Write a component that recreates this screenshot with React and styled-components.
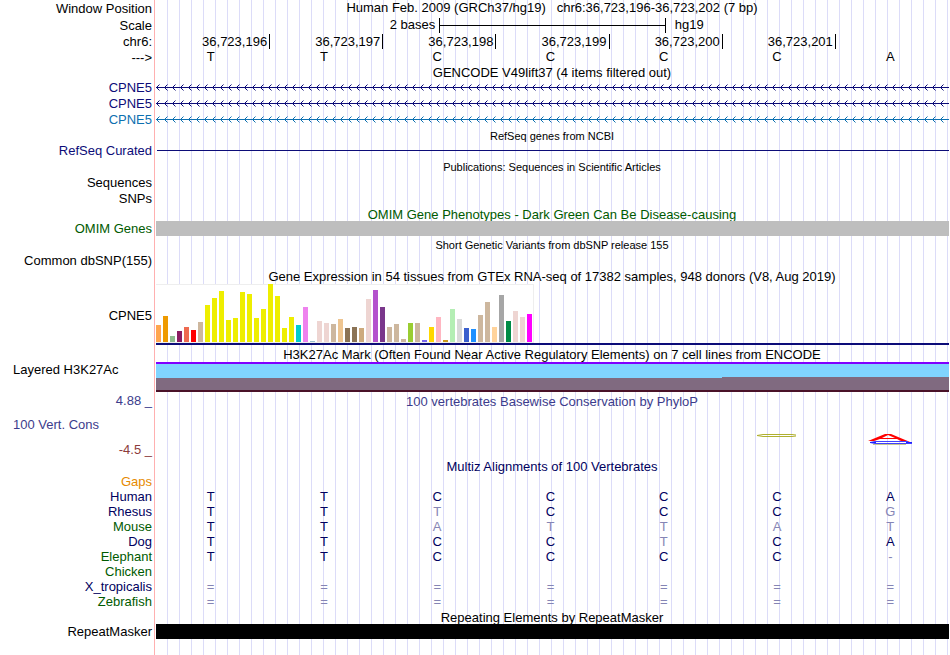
import React from "react";
import styled, { createGlobalStyle } from "styled-components";

const GlobalStyle = createGlobalStyle`
  * {
    box-sizing: border-box;
  }

  body {
    margin: 0;
    background-color: white;
  }
`;

const Browser = styled.main`
  min-height: 100vh;
  padding-right: 1px;
  font-family: "Liberation Sans", Arial, sans-serif;
  font-size: 13px;
  line-height: 16px;
  color: black;
  white-space: nowrap;
  background-image: linear-gradient(
      to right,
      white 154px,
      #ffb0b0 154px,
      #ffb0b0 155px,
      white 155px,
      white 160px,
      transparent 160px
    ),
    repeating-linear-gradient(
      to right,
      transparent 0,
      transparent 11px,
      #dcdcf8 11px,
      #dcdcf8 12px
    );
`;

const Row = styled.div`
  display: grid;
  grid-template-columns: 155px minmax(0, 1fr);
  grid-template-rows: minmax(0, 1fr);
  align-items: center;
  height: ${(props) => props.$height || 16}px;
`;

const Label = styled.div`
  padding: 1px 3px 0 0;
  text-align: right;
  color: ${(props) => props.$color || "black"};
`;

const SideLabel = styled(Label)`
  align-self: start;
  padding: 0 0 0 13px;
  text-align: left;
`;

const Title = styled.h2`
  grid-column: 2;
  margin: 0;
  padding-top: 2px;
  font-size: ${(props) => (props.$small ? 11 : 13)}px;
  font-weight: normal;
  text-align: center;
  color: ${(props) => props.$color || "black"};
`;

const Position = styled(Title)`
  padding-top: 0;
`;

const ScaleTrack = styled.div`
  display: grid;
  grid-template-columns: 5fr 4fr 5fr;
  align-items: center;
  padding-left: 1px;
`;

const ScaleText = styled.span`
  padding: 0 ${(props) => (props.$end ? 9 : 4)}px;
  text-align: ${(props) => (props.$end ? "left" : "right")};
`;

const ScaleBar = styled.div`
  display: flex;
  align-items: center;
  height: 15px;
  border: solid black;
  border-width: 0 1px;

  &::before {
    content: "";
    flex: 1;
    height: 1px;
    background-color: black;
  }
`;

const Ruler = styled.div`
  display: grid;
  grid-template-columns: repeat(7, 1fr);
  padding-left: 2px;
`;

const Tick = styled.span`
  height: 15px;
  padding-right: 2px;
  border-right: 1px solid black;
  text-align: right;
`;

const Bases = styled.div`
  display: grid;
  grid-template-columns: repeat(7, 1fr);
  margin-left: -1px;
  padding-right: 2px;
  text-align: center;
`;

const GeneLine = styled.svg`
  display: block;
  width: 100%;
  height: 10px;
  padding-left: 1px;
`;

const Band = styled.div`
  height: ${(props) => props.$height}px;
  margin-left: ${(props) => props.$inset || 1}px;
  background-color: ${(props) => props.$color};
`;

const Expression = styled.div`
  align-self: start;
  padding-left: 1px;
`;

const ExpressionChart = styled.div`
  display: flex;
  align-items: flex-end;
  gap: 2px;
  width: 378px;
  height: 59px;
  background-color: white;
  border: solid #eeeeee;
  border-width: 1px 1px 1px 0;
`;

const Bar = styled.div`
  flex: 0 0 5px;
`;

const ExpressionBase = styled.div`
  height: 2px;
  background-color: #0c0c78;
`;

const Histone = styled.div`
  display: grid;
  grid-template-columns: 5fr 2fr;
  height: 30px;
  margin-left: 1px;
  border-top: 2px solid #8000ff;
  background-color: #80d4ff;
`;

const HistoneSignal = styled.div`
  align-self: end;
  height: ${(props) => props.$height}px;
  background-color: #806a80;
  border-bottom: 2px solid #4a1228;
`;

const Conservation = styled.div`
  display: grid;
  grid-template-columns: 155px minmax(0, 1fr);
  height: 66px;
`;

const ConservationLabels = styled.div`
  display: flex;
  flex-direction: column;
  justify-content: space-between;
`;

const Logos = styled(Bases)`
  margin: 24px 0 0;
  justify-items: center;
`;

const Logo = styled.svg`
  display: block;
  grid-column: ${(props) => props.$column};
`;

const AlignmentTrack = styled.div`
  padding-right: 2px;
`;

const Alignment = styled.table`
  width: 100%;
  table-layout: fixed;
  border-spacing: 0;
`;

const Species = styled.th`
  width: 154px;
  height: 15px;
  padding: 0 2px 0 0;
  font-weight: normal;
  line-height: 15px;
  text-align: right;
  color: ${(props) => props.$color};
`;

const AlignedBase = styled.td`
  padding: 0;
  line-height: 15px;
  text-align: center;
  color: ${(props) => (props.$faded ? "#8585b5" : "#00005e")};
`;

const navy = "#0c0c78";
const blue = "#0c70b0";
const darkGreen = "#005a00";
const phylo = "#3c3c8c";

const sequence = ["T", "T", "C", "C", "C", "C", "A"];

const positions = [
  "36,723,196",
  "36,723,197",
  "36,723,198",
  "36,723,199",
  "36,723,200",
  "36,723,201",
];

const genes = [
  { id: "transcript1", name: "CPNE5", color: navy },
  { id: "transcript2", name: "CPNE5", color: navy },
  { id: "transcript3", name: "CPNE5", color: blue },
];

const tissues = [
  [17, "#ffa54f"],
  [26, "#ee9a00"],
  [6, "#8fbc8f"],
  [11, "#8b1c62"],
  [15, "#ee6a50"],
  [12, "#ff0000"],
  [20, "#cdb79e"],
  [37, "#eeee00"],
  [44, "#eeee00"],
  [51, "#eeee00"],
  [22, "#eeee00"],
  [24, "#eeee00"],
  [50, "#eeee00"],
  [48, "#eeee00"],
  [24, "#eeee00"],
  [33, "#eeee00"],
  [58, "#eeee00"],
  [46, "#eeee00"],
  [14, "#eeee00"],
  [25, "#eeee00"],
  [17, "#00cdcd"],
  [35, "#ee82ee"],
  [1, "#9ac0cd"],
  [21, "#eed5d2"],
  [19, "#eed5d2"],
  [18, "#cdb79e"],
  [23, "#eec591"],
  [14, "#8b7355"],
  [15, "#8b7355"],
  [14, "#cdaa7d"],
  [43, "#eed5d2"],
  [52, "#b452cd"],
  [35, "#7a378b"],
  [15, "#cdb79e"],
  [18, "#cdb79e"],
  [3, "#cdb79e"],
  [19, "#9acd32"],
  [19, "#cdb79e"],
  [2, "#7a67ee"],
  [15, "#ffd700"],
  [25, "#ffb6c1"],
  [2, "#cd9b1d"],
  [33, "#b4eeb4"],
  [23, "#d9d9d9"],
  [14, "#3a5fcd"],
  [13, "#1e90ff"],
  [27, "#cdb79e"],
  [40, "#cdb79e"],
  [15, "#ffd39b"],
  [47, "#a6a6a6"],
  [21, "#008b45"],
  [31, "#eed5d2"],
  [25, "#eed5d2"],
  [28, "#ff00ff"],
];

const species = [
  { name: "Gaps", color: "#e68a00", bases: "       " },
  { name: "Human", color: "#00005e", bases: "TTCCCCA" },
  { name: "Rhesus", color: "#00005e", bases: "TTTCCCG" },
  { name: "Mouse", color: darkGreen, bases: "TTATTAT" },
  { name: "Dog", color: "#00005e", bases: "TTCCTCA" },
  { name: "Elephant", color: darkGreen, bases: "TTCCCC-" },
  { name: "Chicken", color: darkGreen, bases: "       " },
  { name: "X_tropicalis", color: "#00005e", bases: "=======" },
  { name: "Zebrafish", color: darkGreen, bases: "=======" },
];

const Gene = ({ id, name, color }) => (
  <Row>
    <Label $color={color}>{name}</Label>
    <GeneLine aria-hidden="true">
      <defs>
        <pattern id={id} width="8" height="10" patternUnits="userSpaceOnUse">
          <path d="M1 4h1v1h-1zM2 3h1v1h-1zM1 6h1v1h-1zM2 7h1v1h-1z" fill={color} />
          <path d="M3 2h1v1h-1zM3 8h1v1h-1z" fill={color} opacity="0.5" />
        </pattern>
      </defs>
      <rect width="100%" height="10" fill={`url(#${id})`} />
      <rect y="5" width="100%" height="1" fill={color} />
    </GeneLine>
  </Row>
);

const App = () => {
  return (
    <>
      <GlobalStyle />
      <Browser>
        <Row>
          <Label>Window Position</Label>
          <Position>
            Human Feb. 2009 (GRCh37/hg19) &nbsp; chr6:36,723,196-36,723,202 (7
            bp)
          </Position>
        </Row>
        <Row $height={18}>
          <Label>Scale</Label>
          <ScaleTrack>
            <ScaleText>2 bases</ScaleText>
            <ScaleBar />
            <ScaleText $end>hg19</ScaleText>
          </ScaleTrack>
        </Row>
        <Row $height={15}>
          <Label>chr6:</Label>
          <Ruler>
            {positions.map((position) => (
              <Tick key={position}>{position}</Tick>
            ))}
          </Ruler>
        </Row>
        <Row>
          <Label>---&gt;</Label>
          <Bases>
            {sequence.map((base, i) => (
              <span key={i}>{base}</span>
            ))}
          </Bases>
        </Row>
        <Row $height={14}>
          <Title>GENCODE V49lift37 (4 items filtered out)</Title>
        </Row>
        {genes.map((gene) => (
          <Gene key={gene.id} {...gene} />
        ))}

        <Row>
          <Title $small>RefSeq genes from NCBI</Title>
        </Row>
        <Row $height={15}>
          <Label $color={navy}>RefSeq Curated</Label>
          <Band $height={1} $inset={2} $color={navy} />
        </Row>

        <Row>
          <Title $small>Publications: Sequences in Scientific Articles</Title>
        </Row>
        <Row>
          <Label>Sequences</Label>
        </Row>
        <Row>
          <Label>SNPs</Label>
        </Row>

        <Row $height={15}>
          <Title $color={darkGreen}>
            OMIM Gene Phenotypes - Dark Green Can Be Disease-causing
          </Title>
        </Row>
        <Row $height={15}>
          <Label $color={darkGreen}>OMIM Genes</Label>
          <Band $height={15} $color="#bebebe" />
        </Row>

        <Row>
          <Title $small>Short Genetic Variants from dbSNP release 155</Title>
        </Row>
        <Row>
          <Label>Common dbSNP(155)</Label>
        </Row>

        <Row>
          <Title>
            Gene Expression in 54 tissues from GTEx RNA-seq of 17382 samples,
            948 donors (V8, Aug 2019)
          </Title>
        </Row>
        <Row $height={62}>
          <Label>CPNE5</Label>
          <Expression>
            <ExpressionChart>
              {tissues.map(([height, color], i) => (
                <Bar key={i} style={{ height, backgroundColor: color }} />
              ))}
            </ExpressionChart>
            <ExpressionBase />
          </Expression>
        </Row>

        <Row>
          <Title>
            H3K27Ac Mark (Often Found Near Active Regulatory Elements) on 7
            cell lines from ENCODE
          </Title>
        </Row>
        <Row $height={30}>
          <SideLabel>Layered H3K27Ac</SideLabel>
          <Histone>
            <HistoneSignal $height={14} />
            <HistoneSignal $height={15} />
          </Histone>
        </Row>

        <Conservation>
          <ConservationLabels>
            <Label $color={phylo}>4.88 _</Label>
            <SideLabel $color={phylo}>100 Vert. Cons</SideLabel>
            <Label $color="#8c3c3c">-4.5 _</Label>
          </ConservationLabels>
          <div>
            <Title $color={phylo}>
              100 vertebrates Basewise Conservation by PhyloP
            </Title>
            <Logos>
              <Logo $column={6} width="42" height="4" aria-hidden="true">
                <path
                  d="M40 1L36 .5H7L1 1.5L7 2.5H36L40 2"
                  fill="none"
                  stroke="#b0b030"
                />
              </Logo>
              <Logo $column={7} width="45" height="12" aria-hidden="true">
                <path
                  d="M0 7L17 0H23L42 8H35L29 5H12L6 7ZM14 4H27L20 1Z"
                  fill="#ff0000"
                  fillRule="evenodd"
                />
                <path
                  d="M40 7.5H7L2 8.5L7 9.5H44"
                  fill="none"
                  stroke="#4040ff"
                />
                <path d="M2 8.5H8M38 8.5H44" stroke="#2020ff" />
                <path d="M5 10.5H38" stroke="#c8c890" />
              </Logo>
            </Logos>
          </div>
        </Conservation>

        <Row>
          <Title $color="#00005e">Multiz Alignments of 100 Vertebrates</Title>
        </Row>
        <AlignmentTrack>
          <Alignment>
            <tbody>
              {species.map((row) => (
                <tr key={row.name}>
                  <Species scope="row" $color={row.color}>
                    {row.name}
                  </Species>
                  {row.bases.split("").map((base, i) => (
                    <AlignedBase key={i} $faded={base !== sequence[i]}>
                      {base}
                    </AlignedBase>
                  ))}
                </tr>
              ))}
            </tbody>
          </Alignment>
        </AlignmentTrack>

        <Row $height={15}>
          <Title>Repeating Elements by RepeatMasker</Title>
        </Row>
        <Row $height={15}>
          <Label>RepeatMasker</Label>
          <Band $height={15} $color="black" />
        </Row>
      </Browser>
    </>
  );
};

export default App;
